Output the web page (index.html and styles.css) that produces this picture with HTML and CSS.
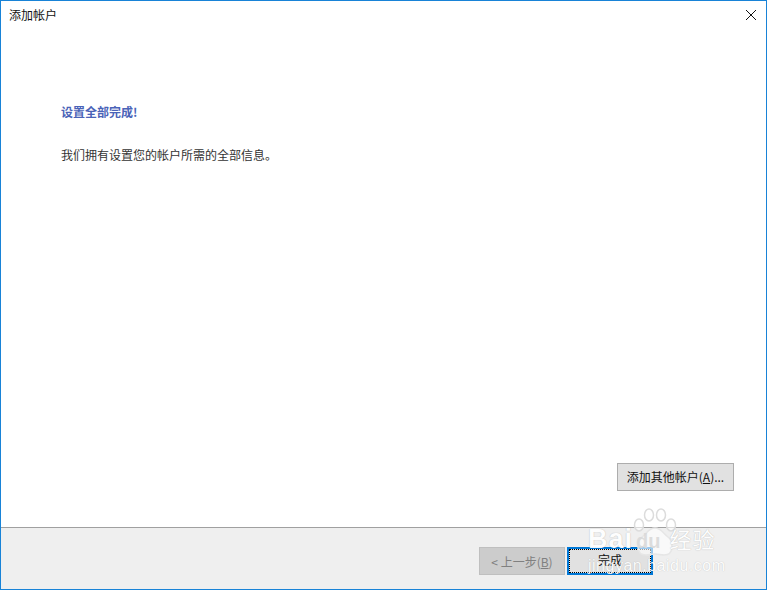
FILE: index.html
```html
<!DOCTYPE html>
<html lang="zh">
<head>
<meta charset="utf-8">
<title>添加帐户</title>
<link rel="stylesheet" href="styles.css">
</head>
<body>
<div class="window">
  <header class="titlebar">
    <span class="title">添加帐户</span>
    <svg class="close" width="10" height="10" viewBox="0 0 10 10"><path d="M0 0L10 10M10 0L0 10" stroke="#111" stroke-width="1" fill="none"/></svg>
  </header>
  <main class="content">
    <h1 class="heading">设置全部完成!</h1>
    <p class="message">我们拥有设置您的帐户所需的全部信息。</p>
    <div class="spacer"></div>
    <div class="extra-row"><button class="btn extra">添加其他帐户(<u>A</u>)...</button></div>
  </main>
  <footer class="footer">
    <button class="btn disabled">&lt; 上一步(<u>B</u>)</button>
    <button class="btn primary"><span class="focus">完成</span></button>
  </footer>
  <div class="watermark">
    <svg class="paw" width="44" height="52" viewBox="0 0 44 52" fill="#fff" fill-opacity=".6" stroke="#dcdcdc" stroke-width="1.500">
      <ellipse cx="6" cy="17" rx="4.500" ry="6"/>
      <ellipse cx="16" cy="7" rx="4.500" ry="6"/>
      <ellipse cx="28" cy="7" rx="4.500" ry="6"/>
      <ellipse cx="38" cy="17" rx="4.500" ry="6"/>
      <path stroke="#e6e6e6" d="M22 20c-6 0-8 5-13 9s-7 18 4 18c3 0 6-1 9-1s6 1 9 1c11 0 9-14 4-18s-7-9-13-9z"/>
    </svg>
    <span class="wm-brand">Bai<span class="wm-du">du</span><span class="wm-cn">经验</span></span>
    <span class="wm-url">jingyan.baidu.com</span>
  </div>
</div>
</body>
</html>
```
FILE: styles.css
```css
html, body { margin: 0; padding: 0; height: 100%; }
body { overflow: hidden; background: #fff; font-family: "Noto Sans CJK SC", "Liberation Sans", sans-serif; font-size: 12px; color: #222; }
.window { position: relative; box-sizing: border-box; width: 767px; height: 590px; border: 1px solid #1883d7; display: flex; flex-direction: column; background: #fff; }
.titlebar { height: 27px; flex: none; display: flex; align-items: flex-start; justify-content: space-between; padding: 0 10px 0 8px; }
.title { font-size: 12px; line-height: 28px; color: #111; }
.close { margin-top: 9px; }
.content { flex: 1; display: flex; flex-direction: column; padding: 75px 32px 36px 60px; min-height: 0; }
.heading { margin: 0; font-size: 12px; line-height: 18px; font-weight: 700; color: #4a63b8; }
.message { margin: 25px 0 0; font-size: 12px; line-height: 18px; color: #333; }
.spacer { flex: 1; }
.extra-row { display: flex; justify-content: flex-end; }
.btn { box-sizing: border-box; height: 28px; padding: 0 8px; background: #e1e1e1; border: 1px solid #adadad; font: inherit; font-size: 12px; color: #111; }
.extra { width: 117px; padding: 0 0 2px; }
.footer { height: 62px; flex: none; box-sizing: border-box; background: #efefef; border-top: 1px solid #a0a0a0; display: flex; justify-content: flex-end; align-items: flex-start; gap: 2px; padding: 19px 113px 0 0; }
.footer .btn { width: 86px; }
.disabled { background: #cccccc; border-color: #bfbfbf; color: #808080; }
.primary { border: 2px solid #0078d7; padding: 0; }
.focus { display: block; height: 100%; line-height: 22px; outline: 1px dotted #000; outline-offset: -1px; }
.watermark { position: absolute; left: 586px; top: 505px; width: 150px; height: 80px; color: #fff; pointer-events: none; }
.paw { position: absolute; left: 46px; top: 2px; }
.wm-brand { position: absolute; left: 1px; top: 17px; display: flex; align-items: baseline; font-family: "Liberation Sans", "Noto Sans CJK SC", sans-serif; font-size: 27px; font-weight: 700; line-height: 30px; white-space: nowrap; letter-spacing: 1px; opacity: .9; text-shadow: 0 0 1px rgba(0,0,0,.3); }
.wm-du { font-size: 20px; letter-spacing: 0; margin-left: 3px; color: #d9d9d9; text-shadow: none; }
.wm-cn { font-family: "Noto Sans CJK SC", sans-serif; font-size: 22px; font-weight: 400; margin-left: 9px; letter-spacing: 1px; }
.wm-url { position: absolute; left: 1px; top: 51px; font-family: "Liberation Sans", sans-serif; font-size: 16px; line-height: 18px; white-space: nowrap; letter-spacing: .5px; opacity: .85; text-shadow: 0 0 1px rgba(0,0,0,.25); }
```
